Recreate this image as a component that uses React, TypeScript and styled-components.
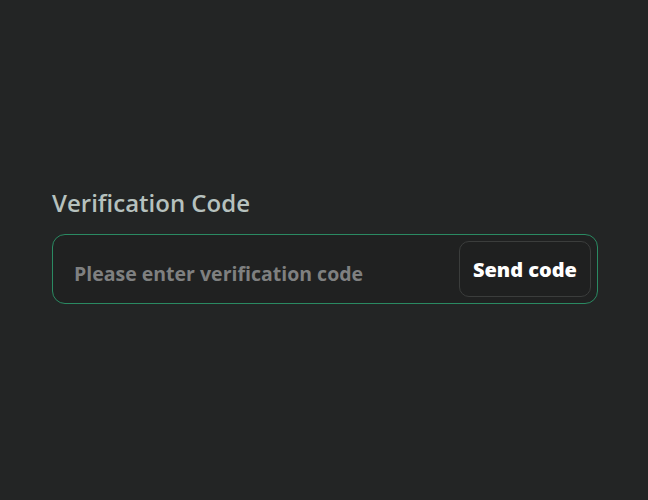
import React from 'react';
import styled, { createGlobalStyle } from 'styled-components';

const GlobalStyle = createGlobalStyle`
  html, body {
    margin: 0;
    padding: 0;
    background: #232525;
  }
  * {
    box-sizing: border-box;
  }
`;

const Page = styled.div`
  width: 648px;
  height: 500px;
  background: #232525;
  padding: 188px 50px 0 52px;
  font-family: 'Open Sans', Lato, sans-serif;
`;

const Field = styled.div`
  display: flex;
  flex-direction: column;
  gap: 16px;
`;

const Label = styled.label`
  font-size: 24px;
  font-weight: 600;
  color: #b6c1be;
  line-height: 30px;
`;

const InputBox = styled.div`
  display: flex;
  align-items: center;
  height: 70px;
  padding: 6px 6px 6px 19px;
  border: 1px solid #2a8a62;
  border-radius: 13px;
  background: #202121;
`;

const Input = styled.input`
  flex: 1;
  min-width: 0;
  border: none;
  outline: none;
  background: transparent;
  font-family: inherit;
  font-size: 19.5px;
  font-weight: 700;
  color: #e0e0e0;
  padding: 8px 0 0 2px;

  &::placeholder {
    color: #7f8080;
  }
`;

const SendButton = styled.button`
  height: 56px;
  padding: 0 13px;
  margin-left: 1px;
  border: 1px solid #3b3d3c;
  border-radius: 10px;
  background: #1f2020;
  color: #ffffff;
  font-family: inherit;
  font-size: 20px;
  font-weight: 800;
  cursor: pointer;
`;

export default function App() {
  return (
    <>
      <GlobalStyle />
      <Page>
        <Field>
          <Label htmlFor="code">Verification Code</Label>
          <InputBox>
            <Input id="code" placeholder="Please enter verification code" />
            <SendButton>Send code</SendButton>
          </InputBox>
        </Field>
      </Page>
    </>
  );
}
